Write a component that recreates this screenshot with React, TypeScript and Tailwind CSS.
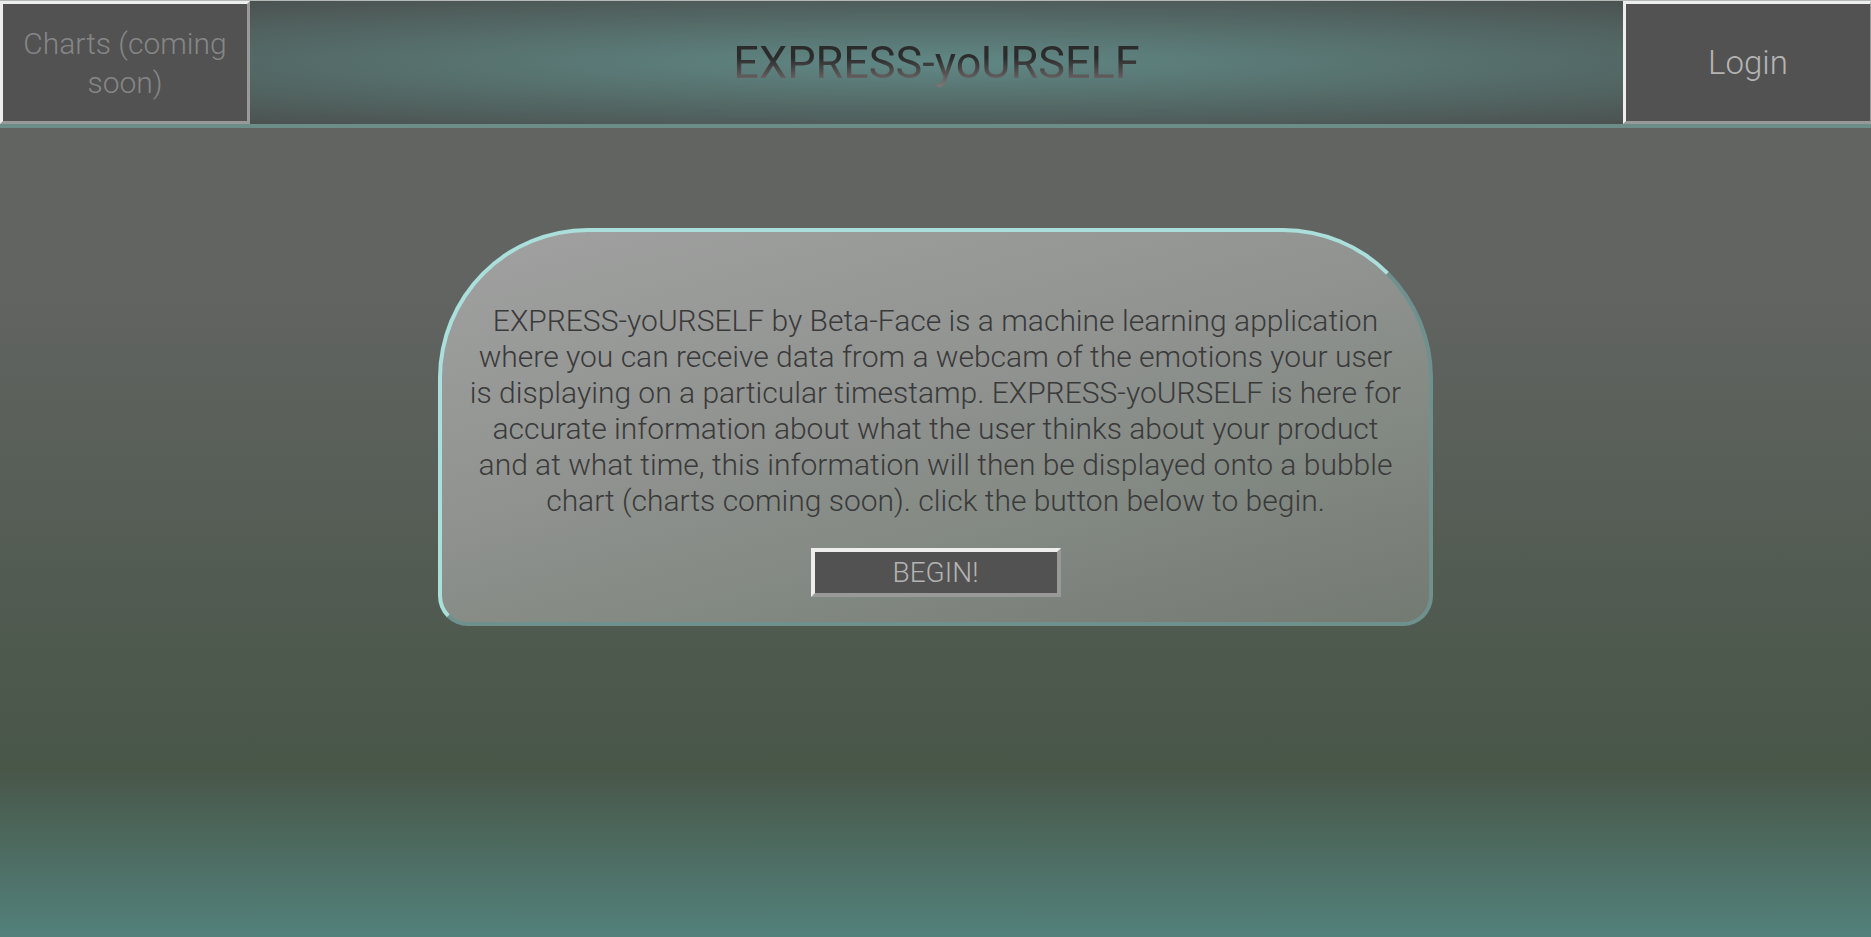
const raised =
  'border-t-[#eeeeee] border-l-[#eeeeee] border-r-[#999999] border-b-[#999999] bg-[#525252]';

function Header() {
  return (
    <header className="flex h-32 items-stretch border-t border-b-4 border-t-[#b4b8b6] border-b-[#6c8d8a] bg-[radial-gradient(ellipse_at_center,#608885_0%,#484b49_100%)]">
      <button
        type="button"
        disabled
        className={`w-[250px] shrink-0 border-3 px-2 text-[30px] leading-[39px] text-[#868686] ${raised}`}
      >
        Charts (coming soon)
      </button>
      <h1 className="flex flex-1 items-center justify-center text-[45px] leading-[56px] font-normal">
        <span className="bg-linear-to-b from-[#2b2b2b] from-40% to-[#857c7c] to-95% bg-clip-text text-transparent">
          EXPRESS-yoURSELF
        </span>
      </h1>
      <button
        type="button"
        className={`w-[248px] shrink-0 border-3 border-r px-2 text-[33px] leading-[39px] text-[#b4b4b4] ${raised}`}
      >
        Login
      </button>
    </header>
  );
}

function Intro() {
  return (
    <section className="flex w-full max-w-[995px] flex-col items-center rounded-t-[150px] rounded-b-[30px] border-4 border-t-[#aadfdb] border-r-[#6f918e] border-b-[#6f918e] border-l-[#aadfdb] bg-linear-[165deg,#a0a1a0_0%,#929492_40%,#838983_68%,#737a72_100%] px-6 pt-[71px] pb-[25px]">
      <p className="text-center text-[30px] leading-9 text-[#3a3a3a]">
        EXPRESS-yoURSELF by Beta-Face is a machine learning application where you can receive data
        from a webcam of the emotions your user is displaying on a particular timestamp.
        EXPRESS-yoURSELF is here for accurate information about what the user thinks about your
        product and at what time, this information will then be displayed onto a bubble chart
        (charts coming soon). click the button below to begin.
      </p>
      <button
        type="button"
        className={`mt-[29px] h-[49px] w-[250px] border-4 text-[28px] leading-9 text-[#b4b4b4] ${raised}`}
      >
        BEGIN!
      </button>
    </section>
  );
}

export default function App() {
  return (
    <div className="min-h-screen bg-linear-[180deg,#636563_0%,#626462_30%,#485648_82%,#52817b_100%] font-['Roboto',sans-serif] font-light">
      <Header />
      <main className="flex justify-center px-4 pt-[100px]">
        <Intro />
      </main>
    </div>
  );
}
